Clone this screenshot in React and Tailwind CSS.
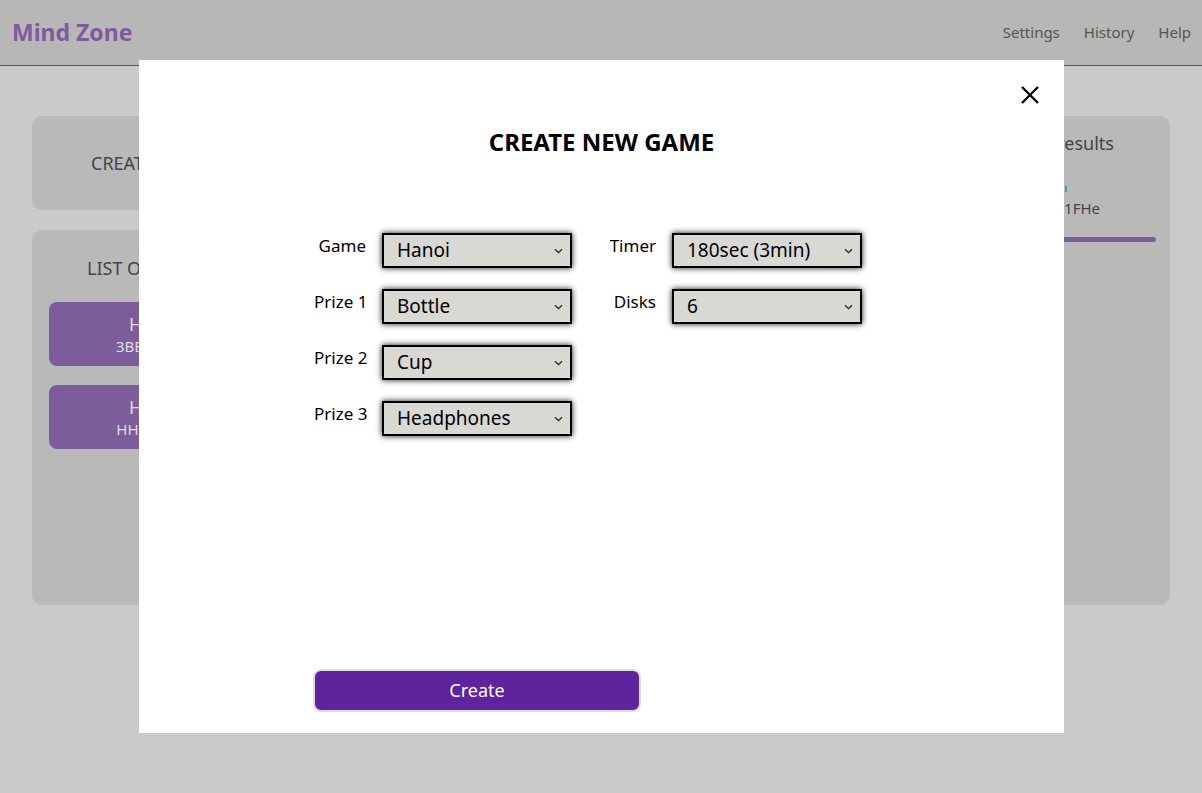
import React, { useState } from "react";

const font = { fontFamily: '"Noto Sans", "Open Sans", sans-serif' };

const Chevron = () => (
  <svg width="9" height="6" viewBox="0 0 9 6" className="absolute right-[9px] top-1/2 -translate-y-1/2 pointer-events-none">
    <path d="M1 1.2 L4.5 4.6 L8 1.2" fill="none" stroke="#222" strokeWidth="1.3" />
  </svg>
);

const Field = ({ label, value, options }) => (
  <div className="flex items-start h-[34px]">
    <span className="w-[68px] shrink-0 pr-[16px] text-right text-[17px] leading-[28px] text-black -mt-[1px] whitespace-nowrap">{label}</span>
    <div className="relative">
      <select
        defaultValue={value}
        className="appearance-none w-[190px] h-[35px] border-2 border-black bg-[#d9d9d4] pl-[13px] text-[19px] text-black shadow-[0_0_6px_rgba(0,0,0,0.9)] outline-none"
        style={font}
      >
        {options.map((o) => (
          <option key={o}>{o}</option>
        ))}
      </select>
      <Chevron />
    </div>
  </div>
);

const App = () => {
  const [open, setOpen] = useState(true);

  return (
    <div className="relative w-[1202px] h-[793px] overflow-hidden bg-[#cacaca]" style={font}>
      <header className="h-[66px] bg-[#b7b7b6] border-b border-[#555] flex items-center justify-between pl-[12px] pr-[11px]">
        <span className="text-[23px] font-bold text-[#7f5aa0] -mt-[1px]">Mind Zone</span>
        <nav className="flex gap-[24px] text-[15px] text-[#555]">
          <span>Settings</span>
          <span>History</span>
          <span>Help</span>
        </nav>
      </header>

      <div className="flex gap-[20px] px-[32px] pt-[50px]">
        <div className="w-[244px] flex flex-col gap-[20px]">
          <div className="h-[94px] rounded-[10px] bg-[#b9b9b9] flex items-center pl-[59px] text-[18px] text-[#444] whitespace-nowrap">
            CREATE NEW GAME
          </div>
          <div className="h-[375px] rounded-[10px] bg-[#b9b9b9] px-[17px] pt-[25px]">
            <div className="pl-[38px] text-[18px] text-[#444] whitespace-nowrap">LIST OF GAMES</div>
            <div className="mt-[20px] flex flex-col gap-[19px]">
              <div className="h-[64px] rounded-[8px] bg-[#7d5c9b] flex flex-col items-center justify-center text-[#ddd]">
                <span className="text-[18px] leading-[24px]">Hanoi</span>
                <span className="text-[15px] leading-[20px]">3BBA9KHC</span>
              </div>
              <div className="h-[64px] rounded-[8px] bg-[#7d5c9b] flex flex-col items-center justify-center text-[#ddd]">
                <span className="text-[18px] leading-[24px]">Hanoi</span>
                <span className="text-[15px] leading-[20px]">HHCF1FHe</span>
              </div>
            </div>
          </div>
        </div>
        <div className="flex-1" />
        <div className="w-[318px] h-[489px] rounded-[10px] bg-[#b9b9b9] px-[14px] pt-[14px] text-[#444]">
          <div className="text-[18px] text-right pr-[42px]">Game results</div>
          <div className="mt-[29px] h-[6px] w-[2px] ml-[199px] bg-[#3aa]" />
          <div className="mt-[5px] text-[15px] text-right pr-[56px]">HHCF1FHe</div>
          <div className="mt-[17px] h-[5px] rounded-full bg-[#7d5c9b]" />
        </div>
      </div>

      {open && (
        <div className="absolute left-[139px] top-[60px] w-[925px] h-[673px] bg-white">
          <button
            onClick={() => setOpen(false)}
            className="absolute right-[24px] top-[25px] w-[20px] h-[20px]"
          >
            <svg width="20" height="20" viewBox="0 0 20 20">
              <path d="M2 2 L18 18 M18 2 L2 18" stroke="#000" strokeWidth="2.4" />
            </svg>
          </button>
          <h2 className="text-center text-[24px] font-bold text-black pt-[66px] leading-[32px]">CREATE NEW GAME</h2>

          <div className="flex gap-[32px] pl-[175px] mt-[75px]">
            <div className="flex flex-col gap-[22px]">
              <Field label="Game" value="Hanoi" options={["Hanoi"]} />
              <Field label="Prize 1" value="Bottle" options={["Bottle", "Cup", "Headphones"]} />
              <Field label="Prize 2" value="Cup" options={["Bottle", "Cup", "Headphones"]} />
              <Field label="Prize 3" value="Headphones" options={["Bottle", "Cup", "Headphones"]} />
            </div>
            <div className="flex flex-col gap-[22px]">
              <Field label="Timer" value="180sec (3min)" options={["60sec (1min)", "120sec (2min)", "180sec (3min)"]} />
              <Field label="Disks" value="6" options={["3", "4", "5", "6", "7"]} />
            </div>
          </div>

          <button className="absolute left-[174px] top-[609px] w-[328px] h-[43px] rounded-[8px] border-2 border-[#ddd] bg-[#5e239d] text-white text-[18px]">
            Create
          </button>
        </div>
      )}
    </div>
  );
};

export default App;
